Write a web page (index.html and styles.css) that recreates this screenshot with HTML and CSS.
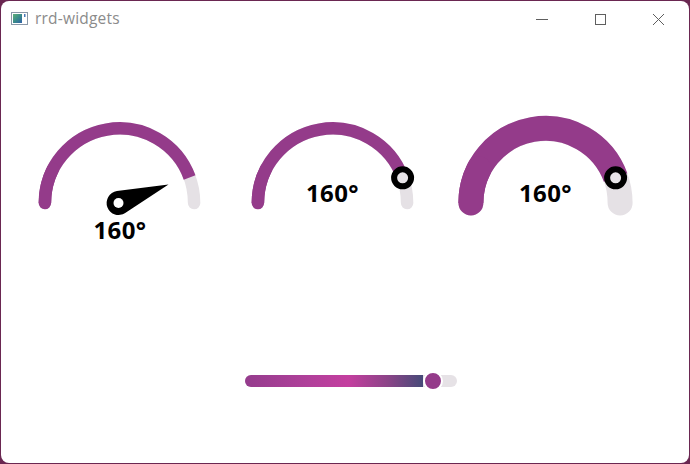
FILE: index.html
```html
<!DOCTYPE html>
<html>
<head>
<meta charset="utf-8">
<link rel="stylesheet" href="styles.css">
</head>
<body>
<div class="window">
  <div class="titlebar">
    <svg class="app-icon" width="17" height="13" viewBox="0 0 17 13">
      <defs>
        <linearGradient id="ig" x1="0" y1="0" x2="1" y2="1">
          <stop offset="0" stop-color="#5fb07a"/>
          <stop offset="0.5" stop-color="#3a8c8a"/>
          <stop offset="1" stop-color="#2f5fa8"/>
        </linearGradient>
      </defs>
      <rect x="0.5" y="0.5" width="16" height="12" fill="#ffffff" stroke="#8a98a8"/>
      <rect x="2" y="2" width="9" height="9" fill="url(#ig)"/>
      <rect x="13" y="2" width="1.5" height="3" fill="#4a78b8"/>
    </svg>
    <span class="title">rrd-widgets</span>
    <div class="controls">
      <svg class="ctl" width="58" height="32" viewBox="0 0 58 32"><line x1="23" y1="18.5" x2="35" y2="18.5" stroke="#5f5f5f" stroke-width="1"/></svg>
      <svg class="ctl" width="58" height="32" viewBox="0 0 58 32"><rect x="24.5" y="13.5" width="10" height="10" fill="none" stroke="#5f5f5f" stroke-width="1"/></svg>
      <svg class="ctl" width="58" height="32" viewBox="0 0 58 32"><path d="M24 13 L35 24 M35 13 L24 24" stroke="#5f5f5f" stroke-width="1"/></svg>
    </div>
  </div>
  <div class="gauges">
    <div class="gauge">
      <svg width="213" height="140" viewBox="0 0 213 140">
        <path d="M31.9 93 A74.6 74.6 0 0 1 181.1 93" fill="none" stroke="#e5e1e5" stroke-width="12.5" stroke-linecap="round"/>
        <path d="M31.9 93 A74.6 74.6 0 0 1 176.6 67.5" fill="none" stroke="#943b8a" stroke-width="12.5"/>
        <path d="M31.9 93 A74.6 74.6 0 0 1 40 59" fill="none" stroke="#943b8a" stroke-width="12.5" stroke-linecap="round"/>
        <path d="M155.5 74.5 L112.2 103 A12 12 0 1 1 103.9 81.1 Z" fill="#000"/>
        <circle cx="105.5" cy="93" r="5" fill="#fff"/>
        <text x="107" y="128.5" class="val">160°</text>
      </svg>
    </div>
    <div class="gauge">
      <svg width="213" height="140" viewBox="0 0 213 140">
        <path d="M31.9 93 A74.6 74.6 0 0 1 181.1 93" fill="none" stroke="#e5e1e5" stroke-width="12.5" stroke-linecap="round"/>
        <path d="M31.9 93 A74.6 74.6 0 0 1 176.6 67.5" fill="none" stroke="#943b8a" stroke-width="12.5"/>
        <path d="M31.9 93 A74.6 74.6 0 0 1 40 59" fill="none" stroke="#943b8a" stroke-width="12.5" stroke-linecap="round"/>
        <text x="106.5" y="91.5" class="val">160°</text>
        <circle cx="176.6" cy="67.8" r="8.5" fill="#e8e4e8" stroke="#000" stroke-width="6"/>
      </svg>
    </div>
    <div class="gauge">
      <svg width="213" height="140" viewBox="0 0 213 140">
        <path d="M31.9 93 A74.6 74.6 0 0 1 181.1 93" fill="none" stroke="#e5e1e5" stroke-width="25" stroke-linecap="round"/>
        <path d="M31.9 93 A74.6 74.6 0 0 1 176.6 67.5" fill="none" stroke="#943b8a" stroke-width="25"/>
        <path d="M31.9 93 A74.6 74.6 0 0 1 40 59" fill="none" stroke="#943b8a" stroke-width="25" stroke-linecap="round"/>
        <text x="106.5" y="91.5" class="val">160°</text>
        <circle cx="176.6" cy="67.8" r="8.5" fill="#e8e4e8" stroke="#000" stroke-width="6"/>
      </svg>
    </div>
  </div>
  <div class="slider-row">
    <div class="slider">
      <div class="fill"></div>
      <div class="thumb"></div>
    </div>
  </div>
</div>
</body>
</html>
```

FILE: styles.css
```css
html, body {
  margin: 0;
  padding: 0;
}
body {
  background: #6a2751;
  width: 690px;
  height: 464px;
  overflow: hidden;
}
.window {
  margin: 1px;
  width: 688px;
  height: 462px;
  background: #ffffff;
  border-radius: 8px;
  overflow: hidden;
}
.titlebar {
  display: flex;
  align-items: center;
  height: 36px;
}
.app-icon {
  margin-left: 10px;
  margin-top: -1px;
}
.title {
  margin-left: 7px;
  font-family: "Open Sans", "Noto Sans", sans-serif;
  font-size: 15.5px;
  letter-spacing: 0.2px;
  color: #8b8b8b;
  margin-top: -2px;
}
.controls {
  margin-left: auto;
  margin-right: 2px;
  display: flex;
  align-self: flex-start;
}
.ctl {
  display: block;
}
.gauges {
  display: flex;
  padding-left: 12px;
  margin-top: 73px;
}
.gauge svg {
  display: block;
}
.val {
  font-family: "Open Sans", "Noto Sans", sans-serif;
  font-weight: 700;
  font-size: 24px;
  letter-spacing: 0.4px;
  text-anchor: middle;
  fill: #000;
}
.slider-row {
  display: flex;
  padding-left: 244px;
  margin-top: 125px;
}
.slider {
  position: relative;
  width: 212px;
  height: 12px;
  border-radius: 6px;
  background: #e6e2e6;
}
.fill {
  width: 178px;
  height: 12px;
  border-radius: 6px 0 0 6px;
  background: linear-gradient(to right, #953c8d 0%, #b0409a 35%, #c43e9f 58%, #8c4488 80%, #464a78 100%);
}
.thumb {
  position: absolute;
  left: 178px;
  top: -4px;
  width: 16px;
  height: 16px;
  border-radius: 50%;
  background: #943b8a;
  border: 2px solid #ffffff;
}
```
